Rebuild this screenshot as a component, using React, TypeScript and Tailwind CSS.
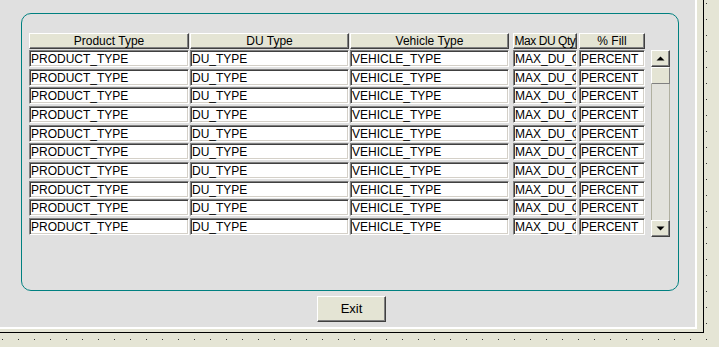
import React from "react";

const ROW_H = [19, 18, 19, 19, 18, 19, 19, 18, 19, 17];

const COLS = [
  { w: "w-[160px]", ml: "ml-0", head: "Product Type", val: "PRODUCT_TYPE", hx: "" },
  { w: "w-[159px]", ml: "ml-[1px]", head: "DU Type", val: "DU_TYPE", hx: "" },
  { w: "w-[159px]", ml: "ml-[1px]", head: "Vehicle Type", val: "VEHICLE_TYPE", hx: "" },
  { w: "w-[64px]", ml: "ml-[4px]", head: "Max DU Qty", val: "MAX_DU_QTY", hx: "tracking-[-0.45px]" },
  { w: "w-[66px]", ml: "ml-[2px]", head: "% Fill", val: "PERCENT", hx: "" },
];

function HeaderCell({ w, ml, text, hx }: { w: string; ml: string; text: string; hx: string }) {
  return (
    <div
      className={`${w} ${ml} h-[16px] shrink-0 border-t border-l border-t-white border-l-white border-b border-r border-b-[#404040] border-r-[#404040] bg-[#e4e4d4] shadow-[inset_-1px_-1px_0_#808080] text-center text-[12px] leading-[15px] text-black whitespace-nowrap overflow-x-clip ${hx}`}
    >
      {text}
    </div>
  );
}

function Cell({ w, ml, text }: { w: string; ml: string; text: string }) {
  return (
    <div
      className={`${w} ${ml} h-[17px] shrink-0 border border-t-[#808080] border-l-[#808080] border-b-white border-r-white bg-white shadow-[inset_1px_1px_0_#404040,inset_-1px_-1px_0_#d4d0c8]`}
    >
      <div className="pl-[1px] pt-[2px] text-[12px] leading-[13px] text-black whitespace-nowrap overflow-x-clip">
        {text}
      </div>
    </div>
  );
}

function ScrollButton({ up }: { up: boolean }) {
  return (
    <div className="h-[17px] w-[19px] flex items-center justify-center border border-t-white border-l-white border-b-[#404040] border-r-[#404040] bg-[#e4e4d4] shadow-[inset_-1px_-1px_0_#808080]">
      <svg width="9" height="5" viewBox="0 0 9 5">
        {up ? (
          <polygon points="0.5,4.5 4.5,0.5 8.5,4.5" fill="#000" />
        ) : (
          <polygon points="0.5,0.5 8.5,0.5 4.5,4.5" fill="#000" />
        )}
      </svg>
    </div>
  );
}

export default function App() {
  return (
    <div
      className="relative w-[719px] h-[347px] overflow-hidden bg-[#e5e5d5]"
      style={{ fontFamily: '"Liberation Sans", Arial, sans-serif' }}
    >
      <svg className="absolute inset-0" width="719" height="347">
        <defs>
          <pattern id="dots" x="0" y="0" width="16" height="16" patternUnits="userSpaceOnUse">
            <rect x="2" y="3" width="1" height="1" fill="#333" />
          </pattern>
        </defs>
        <rect width="719" height="347" fill="url(#dots)" />
      </svg>

      <div className="relative w-[704px] h-[333px] border-r border-b border-black bg-[#e5e5d5]">
        <div className="w-[697px] h-[329px] bg-[#e0e0e0] border-r-2 border-b-2 border-white flex flex-col pt-[13px] pl-[21px]">
          <div className="w-[658px] h-[278px] rounded-[10px] border border-[#008080] pt-[19px] pl-[7px] flex">
            <div className="flex flex-col">
              <div className="flex h-[17px]">
                {COLS.map((c) => (
                  <HeaderCell key={c.head} w={c.w} ml={c.ml} text={c.head} hx={c.hx} />
                ))}
              </div>
              {ROW_H.map((h, i) => (
                <div key={i} className="flex" style={{ height: h }}>
                  {COLS.map((c) => (
                    <Cell key={c.head} w={c.w} ml={c.ml} text={c.val} />
                  ))}
                </div>
              ))}
            </div>
            <div className="ml-[6px] mt-[17px] flex flex-col w-[19px] h-[187px]">
              <ScrollButton up />
              <div className="h-[17px] w-[19px] border border-t-white border-l-white border-b-[#808080] border-r-[#808080] bg-[#e4e4d4]" />
              <div className="flex-1 border-x border-[#b0b0a0] bg-[#e2e2dc]" />
              <ScrollButton up={false} />
            </div>
          </div>
          <div className="mt-[5px] ml-[296px] w-[69px] h-[26px] flex items-center justify-center border border-t-white border-l-white border-b-[#404040] border-r-[#404040] bg-[#e4e4d4] shadow-[inset_-1px_-1px_0_#808080] text-[13px] text-black">
            Exit
          </div>
        </div>
      </div>
    </div>
  );
}
